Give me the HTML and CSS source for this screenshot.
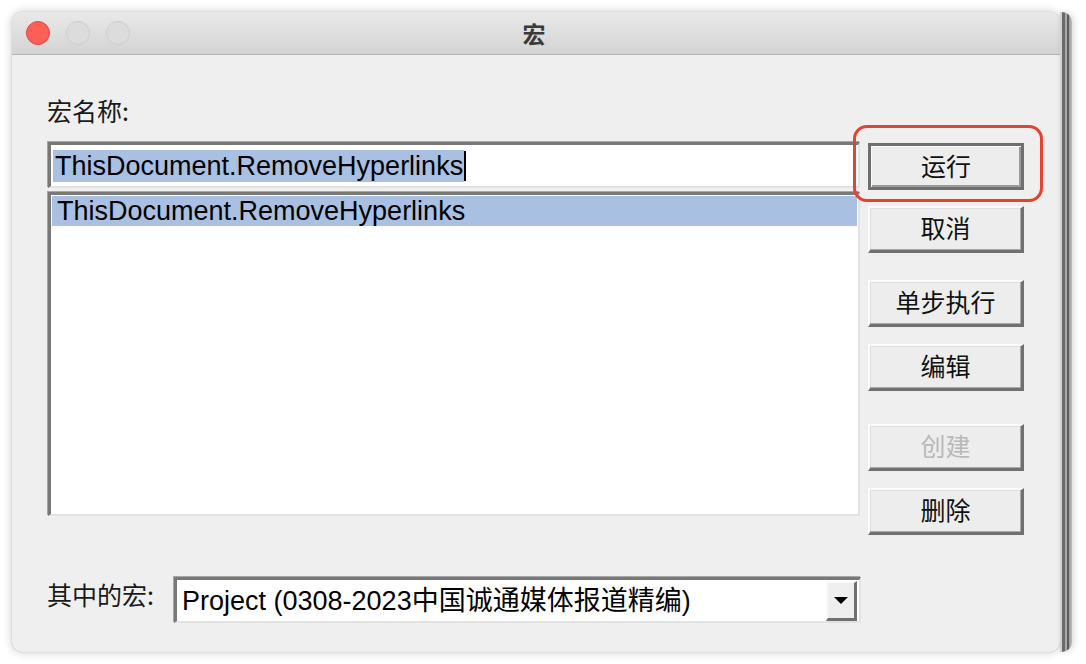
FILE: index.html
```html
<!DOCTYPE html>
<html lang="zh">
<head>
<meta charset="utf-8">
<title>宏</title>
<link rel="stylesheet" href="styles.css">
</head>
<body>
<div class="stage">
  <div class="window">
    <div class="titlebar">
      <div class="lights">
        <span class="light close"></span>
        <span class="light"></span>
        <span class="light"></span>
      </div>
      <div class="title">宏</div>
      <div></div>
    </div>
    <div class="body">
      <div class="label top-label">宏名称:</div>
      <div class="main">
        <div class="left">
          <div class="field"><span class="sel">ThisDocument.RemoveHyperlinks</span><span class="caret"></span></div>
          <div class="list">
            <div class="row selected">ThisDocument.RemoveHyperlinks</div>
          </div>
        </div>
        <div class="buttons">
          <div class="btn-wrap run"><div class="btn default">运行</div><span class="highlight"></span></div>
          <div class="btn-wrap cancel"><div class="btn">取消</div></div>
          <div class="btn-wrap step"><div class="btn">单步执行</div></div>
          <div class="btn-wrap edit"><div class="btn">编辑</div></div>
          <div class="btn-wrap create"><div class="btn disabled">创建</div></div>
          <div class="btn-wrap delete"><div class="btn">删除</div></div>
        </div>
      </div>
      <div class="footer">
        <div class="label foot-label">其中的宏:</div>
        <div class="select">
          <span class="select-text">Project (0308-2023中国诚通媒体报道精编)</span>
          <span class="arrow"><span class="tri"></span></span>
        </div>
      </div>
    </div>
  </div>
  <div class="edge"></div>
</div>
</body>
</html>
```

FILE: styles.css
```css
* { box-sizing: border-box; }
html, body { margin: 0; padding: 0; background: #ffffff; }
body {
  width: 1086px;
  height: 664px;
  overflow: hidden;
  font-family: "Liberation Sans", "Noto Sans CJK SC", sans-serif;
}
.stage {
  display: flex;
  padding: 12px 0 0 12px;
}
.window {
  width: 1048px;
  height: 640px;
  border-radius: 10px;
  background: #efefef;
  box-shadow: 0 0 10px rgba(0,0,0,0.22), 0 0 1px rgba(0,0,0,0.3);
  overflow: hidden;
  display: flex;
  flex-direction: column;
}
.edge {
  width: 12px;
  height: 640px;
  border-radius: 0 10px 10px 0;
  background: linear-gradient(to right,
    #d2d2d2 0, #d2d2d2 2px,
    #6a6a6a 2px, #6a6a6a 5px,
    #a9a9a9 5px, #a9a9a9 7px,
    #5e5e5e 7px, #5e5e5e 9px,
    #9a9a9a 9px, #bdbdbd 12px);
  box-shadow: 2px 0 6px rgba(0,0,0,0.15);
}
.titlebar {
  height: 43px;
  flex: none;
  display: grid;
  grid-template-columns: 1fr auto 1fr;
  align-items: center;
  background: linear-gradient(#e9e9e9, #d4d4d4);
  border-bottom: 1px solid #b4b4b4;
}
.lights {
  display: flex;
  gap: 16px;
  padding-left: 14px;
}
.light {
  width: 24px;
  height: 24px;
  border-radius: 50%;
  background: #dcdcdc;
  border: 1px solid #cdcdcd;
}
.light.close {
  background: #fe5f57;
  border-color: #e1463e;
}
.title {
  font-family: "Noto Sans CJK SC", sans-serif;
  font-size: 23px;
  font-weight: 700;
  color: #3a3a3a;
  line-height: 28px;
  margin-left: -4px;
}
.body {
  flex: 1;
  display: flex;
  flex-direction: column;
  padding: 40px 0 0 36px;
}
.label {
  font-family: "Noto Sans CJK SC", sans-serif;
  font-size: 25px;
  line-height: 30px;
  color: #1a1a1a;
  margin-left: -1px;
}
.top-label { margin-bottom: 17px; }
.main {
  display: flex;
  gap: 8px;
}
.left {
  width: 812px;
  display: flex;
  flex-direction: column;
  gap: 4px;
}
.field {
  height: 46px;
  background: #ffffff;
  border-top: 3px solid #787878;
  border-left: 3px solid #787878;
  border-right: 2px solid #e2e2e2;
  border-bottom: 2px solid #e2e2e2;
  box-shadow: -1px -1px 0 #a6a6a6;
  padding: 3px 2px;
  display: flex;
  align-items: center;
}
.sel {
  background: #a9c0e3;
  font-size: 27px;
  line-height: 32px;
  height: 32px;
  padding: 0 1px 0 2px;
  color: #000;
  white-space: nowrap;
}
.caret {
  width: 2px;
  height: 30px;
  background: #000;
}
.list {
  height: 324px;
  background: #ffffff;
  border-top: 3px solid #787878;
  border-left: 3px solid #787878;
  border-right: 2px solid #e2e2e2;
  border-bottom: 2px solid #e2e2e2;
  box-shadow: -1px -1px 0 #a6a6a6;
  padding: 1px;
}
.row {
  height: 30px;
  line-height: 30px;
  font-size: 27px;
  padding-left: 5px;
  color: #000;
  white-space: nowrap;
}
.row.selected { background: #a9c0e3; }
.buttons {
  width: 156px;
  display: flex;
  flex-direction: column;
}
.btn-wrap { position: relative; }
.run { margin-top: 1px; }
.cancel { margin-top: 16px; }
.step { margin-top: 27px; }
.edit { margin-top: 17px; }
.create { margin-top: 33px; }
.delete { margin-top: 17px; }
.btn {
  height: 47px;
  display: flex;
  align-items: center;
  justify-content: center;
  font-family: "Noto Sans CJK SC", sans-serif;
  font-size: 25px;
  line-height: 30px;
  color: #111;
  background: #ededed;
  border-top: 2px solid #fbfbfb;
  border-left: 2px solid #fbfbfb;
  border-right: 3px solid #707070;
  border-bottom: 3px solid #707070;
  box-shadow: inset -1px -1px 0 #a9a9a9, inset 1px 1px 0 #dedede;
  padding-bottom: 4px;
}
.btn.default {
  border: 3px solid #6f6f6f;
  box-shadow: inset 1px 1px 0 #fafafa, inset -2px -2px 0 #9a9a9a;
}
.btn.disabled { color: #b9b9b9; }
.highlight {
  position: absolute;
  top: -18px;
  left: -15px;
  right: -19px;
  bottom: -12px;
  border: 3px solid #e5432f;
  border-radius: 14px;
}
.footer {
  margin-top: 42px;
  display: flex;
  align-items: center;
}
.foot-label {
  width: 127px;
  margin-top: -12px;
}
.select {
  width: 687px;
  height: 46px;
  background: #ffffff;
  border-top: 3px solid #787878;
  border-left: 3px solid #787878;
  border-right: 2px solid #e2e2e2;
  border-bottom: 2px solid #e2e2e2;
  box-shadow: -1px -1px 0 #a6a6a6;
  display: flex;
  align-items: center;
  padding: 0 2px 0 5px;
}
.select-text {
  flex: 1;
  font-size: 27px;
  color: #000;
  white-space: nowrap;
  line-height: 30px;
}
.arrow {
  width: 31px;
  height: 40px;
  background: #efefef;
  border-top: 2px solid #fafafa;
  border-left: 2px solid #fafafa;
  border-right: 3px solid #707070;
  border-bottom: 3px solid #707070;
  display: flex;
  align-items: center;
  justify-content: center;
}
.tri {
  width: 0;
  height: 0;
  border-left: 7px solid transparent;
  border-right: 7px solid transparent;
  border-top: 7px solid #000;
}
```
